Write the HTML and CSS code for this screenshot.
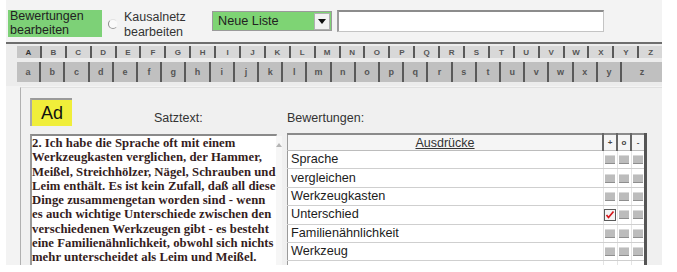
FILE: index.html
```html
<!DOCTYPE html>
<html lang="de">
<head>
    <meta charset="UTF-8">
    <title>Bewertungen</title>
    <link rel="stylesheet" href="styles.css">
</head>
<body>
    <div class="app">
        <div class="toolbar">
            <div class="mode active">Bewertungen<br>bearbeiten</div>
            <div class="mode radio">
                <span class="dot"></span>
                <span>Kausalnetz<br>bearbeiten</span>
            </div>
            <div class="combo">
                <span class="combo-text">Neue Liste</span>
                <span class="drop"><svg width="8" height="5" viewBox="0 0 8 5"><path d="M0 0 L8 0 L4 5 Z" fill="#111"/></svg></span>
            </div>
            <div class="field"></div>
        </div>

        <div class="tabstrip">
            <div class="tabs upper" id="upper"></div>
            <div class="tabs lower" id="lower"></div>
        </div>

        <div class="panel">
            <div class="col-left">
                <div class="head">
                    <span class="ad">Ad</span>
                    <span class="label satz">Satztext:</span>
                </div>
                <div class="textbox">
                    <div class="text">
                        2. Ich habe die Sprache oft mit einem<br>
                        Werkzeugkasten verglichen, der Hammer,<br>
                        Meißel, Streichhölzer, Nägel, Schrauben und<br>
                        Leim enthält. Es ist kein Zufall, daß all diese<br>
                        Dinge zusammengetan worden sind - wenn<br>
                        es auch wichtige Unterschiede zwischen den<br>
                        verschiedenen Werkzeugen gibt - es besteht<br>
                        eine Familienähnlichkeit, obwohl sich nichts<br>
                        mehr unterscheidet als Leim und Meißel.
                    </div>
                    <div class="scroll"><span class="arrow"></span></div>
                </div>
            </div>
            <div class="col-right">
                <div class="label">Bewertungen:</div>
                <table class="grid">
                    <thead>
                        <tr>
                            <th class="word">Ausdrücke</th>
                            <th class="mark">+</th>
                            <th class="mark">o</th>
                            <th class="mark">-</th>
                        </tr>
                    </thead>
                    <tbody id="rows"></tbody>
                </table>
            </div>
        </div>
    </div>

    <script>
        const upper = document.getElementById('upper');
        const lower = document.getElementById('lower');
        'ABCDEFGHIJKLMNOPQRSTUVWXYZ'.split('').forEach((ch, i) => {
            upper.innerHTML += `<span class="tab${i === 0 ? ' on' : ''}">${ch}</span>`;
            lower.innerHTML += `<span class="tab${ch === 'Z' ? ' wide' : ''}">${ch.toLowerCase()}</span>`;
        });

        // Ausdrücke mit Bewertung (+ / o / -)
        const words = [
            ['Sprache', ''],
            ['vergleichen', ''],
            ['Werkzeugkasten', ''],
            ['Unterschied', '+'],
            ['Familienähnlichkeit', ''],
            ['Werkzeug', ''],
            ['', '']
        ];
        const check = '<svg width="10" height="9" viewBox="0 0 10 9"><path d="M1.5 5 L3.5 7.5 L8.5 1.5" fill="none" stroke="#d4161b" stroke-width="1.7"/></svg>';
        document.getElementById('rows').innerHTML = words.map(([w, v]) => `
            <tr>
                <td class="word">${w}</td>
                ${['+', 'o', '-'].map(m => `<td class="mark"><span class="box${v === m ? ' checked' : ''}">${v === m ? check : ''}</span></td>`).join('')}
            </tr>`).join('');
    </script>
</body>
</html>
```

FILE: styles.css
```css
body {
    margin: 0;
    background: #fff;
    font-family: "Liberation Sans", Arial, sans-serif;
}
.app {
    margin-left: 6px;
    width: 656px;
    height: 265px;
    overflow: hidden;
    background: #f3f3f3;
}

/* Kopfzeile */
.toolbar {
    height: 32px;
    padding-top: 10px;
    border-bottom: 2px solid #6e6e6e;
    display: flex;
    align-items: flex-start;
}
.mode {
    font-size: 12.5px;
    line-height: 13.5px;
    color: #222;
}
.mode.active {
    margin-left: 2px;
    width: 92px;
    height: 27px;
    padding-left: 2px;
    background: #7dd177;
}
.mode.radio {
    display: flex;
    align-items: flex-start;
    width: 102px;
    margin-left: 6px;
    line-height: 14.5px;
    color: #333;
}
.dot {
    width: 8px;
    height: 8px;
    margin: 9px 6px 0 0;
    border-radius: 50%;
    border: 1px solid;
    border-color: #e2e2e2 #f3f3f3 #9a9a9a #8a8a8a;
    background: #fafafa;
}
.combo {
    margin-left: 2px;
    margin-top: 1px;
    width: 116px;
    height: 16px;
    padding: 1px;
    border: 1px solid #9a9a9a;
    background: #7ed474;
    display: flex;
    align-items: center;
}
.combo-text {
    flex: 1;
    padding-left: 4px;
    font-size: 12.7px;
    color: #222;
}
.drop {
    width: 14px;
    height: 15px;
    background: #f2f2f2;
    border: 1px solid #b0b0b0;
    display: flex;
    align-items: center;
    justify-content: center;
}
.field {
    margin-left: 5px;
    width: 264px;
    height: 19px;
    background: #fff;
    border: 1px solid #c4c4c4;
    border-top: 2px solid #8c8c8c;
    border-left: 2px solid #9c9c9c;
}

/* Buchstabenleisten */
.tabstrip {
    height: 40px;
    padding: 2px 0 0 11px;
    background: #ececec;
}
.tabs {
    display: flex;
}
.tabs.upper {
    height: 12px;
    margin-bottom: 4px;
}
.tabs.lower {
    height: 20px;
}
.tab {
    flex: 1;
    display: flex;
    align-items: center;
    justify-content: center;
    border-right: 2px solid #5a5a5a;
    font-weight: bold;
    color: #555;
}
.tab:last-child {
    border-right: none;
}
.upper .tab {
    font-size: 8px;
    background: #d8d8d8;
}
.upper .tab.on {
    background: #c6c6c6;
    color: #333;
}
.lower .tab {
    font-size: 9px;
    background: #c0c0c0;
}
.lower .tab.wide {
    flex: 1.8;
}

/* Hauptbereich */
.panel {
    margin: 1px 0 0 14px;
    height: 200px;
    padding: 10px 0 0 9px;
    background: #f0f0f0;
    border-left: 1px solid #b0b0b0;
    border-top: 1px solid #e0e0e0;
    display: flex;
    gap: 10px;
}
.label {
    font-size: 12.5px;
    color: #333;
}
.col-left {
    width: 247px;
}
.head {
    height: 28px;
    display: flex;
    align-items: flex-end;
}
.ad {
    width: 40px;
    height: 26px;
    line-height: 26px;
    text-align: center;
    font-size: 18px;
    color: #111;
    background: #f0ee3a;
    border-top: 2px solid #9a9a9a;
    border-left: 2px solid #a8a8a8;
}
.satz {
    margin-left: 82px;
    padding-bottom: 1px;
}
.textbox {
    margin-top: 8px;
    height: 140px;
    display: flex;
    background: #fff;
    border-top: 2px solid #8a8a8a;
    border-left: 2px solid #9a9a9a;
    border-right: 1px solid #c8c8c8;
}
.text {
    flex: 1;
    font-family: "Liberation Serif", "Times New Roman", serif;
    font-weight: bold;
    font-size: 12.7px;
    line-height: 14.3px;
    letter-spacing: 0.05px;
    color: #351d1d;
    white-space: nowrap;
}
.scroll {
    width: 15px;
    background: #f6f6f6;
    display: flex;
    justify-content: center;
}
.arrow {
    margin-top: 7px;
    width: 0;
    height: 0;
    border: 3px solid transparent;
    border-bottom: 4px solid #b4b4b4;
    border-top: none;
}

.col-right {
    width: 360px;
    padding-top: 13px;
}
.grid {
    margin-top: 8px;
    width: 360px;
    border-collapse: collapse;
    background: #fff;
    border-top: 2px solid #8a8a8a;
    border-left: 1px solid #9a9a9a;
    border-right: 3px solid #555;
}
.grid th {
    height: 15px;
    padding: 0;
    background: #f5f5f5;
    font-weight: normal;
    border-bottom: 1px solid #bcbcbc;
}
.grid th.word {
    font-size: 12.5px;
    text-decoration: underline;
    color: #333;
}
.grid th.mark {
    width: 12px;
    font-size: 8px;
    font-weight: bold;
    color: #444;
    border-left: 2px solid #666;
}
.grid td {
    height: 17.4px;
    padding: 0;
    line-height: 15px;
    border-bottom: 1px solid #cfcfcf;
}
.grid td.word {
    padding-left: 3px;
    font-size: 12.7px;
    color: #1c1c1c;
}
.grid td.mark {
    font-size: 0;
    line-height: 0;
    text-align: center;
    border-left: 1px solid #e4e4e4;
}
.box {
    display: inline-block;
    vertical-align: middle;
    width: 10px;
    height: 7px;
    background: #bcbcbc;
    border-top: 1px solid #dadada;
    border-bottom: 1px solid #8e8e8e;
}
.box.checked {
    width: 10px;
    height: 10px;
    background: #f4f4f4;
    border: 1px solid #5a5a5a;
    display: inline-flex;
    align-items: center;
    justify-content: center;
}
```
